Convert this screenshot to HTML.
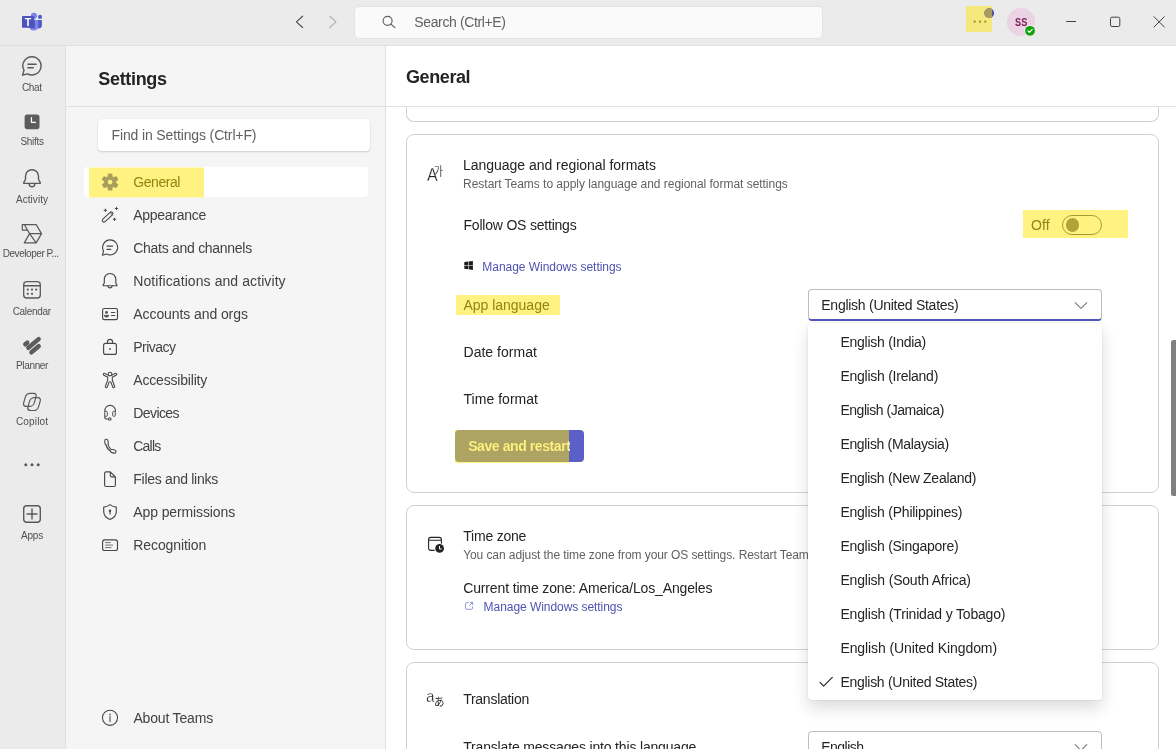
<!DOCTYPE html>
<html><head><meta charset="utf-8"><title>Settings</title>
<style>
*{box-sizing:border-box;margin:0;padding:0}
html,body{width:1176px;height:749px;overflow:hidden;background:#fff;font-family:"Liberation Sans",sans-serif;color:#242424}
.a{position:absolute}
.t{position:absolute;white-space:nowrap}
.card{position:absolute;left:406px;width:753px;border:1px solid #d1d1d1;border-radius:8px;background:#fff}
svg{position:absolute;overflow:visible}
</style></head><body>
<div id="app" style="position:absolute;left:0;top:0;width:1176px;height:749px;will-change:transform">
<div class="a" style="left:0;top:0;width:1176px;height:46px;background:#ebebeb;border-bottom:1px solid #e0e0e0"></div>
<div class="a" style="left:0;top:46px;width:66px;height:703px;background:#ebebeb;border-right:1px solid #e1e1e1"></div>
<div class="a" style="left:66px;top:45px;width:320px;height:704px;background:#f5f5f5;border-right:1px solid #e0e0e0;border-top:1px solid #e0e0e0"></div>
<div class="a" style="left:353.5px;top:5.5px;width:469px;height:33px;background:#fafafa;border:1px solid #e3e3e3;border-radius:5px"></div>
<div class="a" style="left:966px;top:6px;width:26px;height:26px;background:#f5e87c"></div>
<div class="a" style="left:1007px;top:7.5px;width:28px;height:28px;border-radius:50%;background:#ead3e2"></div>
<svg style="left:0px;top:0px" width="60" height="45" viewBox="0 0 60 45" ><circle cx="33.9" cy="15.8" r="3.1" fill="#7b83eb"/><circle cx="40" cy="16.9" r="2.05" fill="#5059c9"/><path d="M36.5 19.9H41.2a.7.7 0 0 1 .7.7V25a3.6 3.6 0 0 1-3.6 3.6h-.3a3.6 3.6 0 0 1-1.8-.5z" fill="#5059c9"/><path d="M29.5 19.9H37.5a.8.8 0 0 1 .8.8V26a4.6 4.6 0 0 1-9.2 0V20.3z" fill="#7b83eb"/><path d="M33 19.9H34.9V27.4a.9.9 0 0 1-.9.9H29.9a4.6 4.6 0 0 1-.8-2.3z" fill="#3b3f8f" opacity=".55"/><rect x="22" y="16" width="12.2" height="11.8" rx=".9" fill="#4b53bc"/><text x="28.05" y="25.9" font-family="Liberation Sans,sans-serif" font-weight="700" font-size="10.6" fill="#fff" text-anchor="middle">T</text></svg>
<svg style="left:0px;top:0px" width="60" height="45" viewBox="0 0 60 45" ><path d="M302.6 16.2L296.4 21.85L302.6 27.5" fill="none" stroke="#4d4d4d" stroke-width="1.15" stroke-linecap="round" stroke-linejoin="round"/><path d="M329.8 16.2L336 21.85L329.8 27.5" fill="none" stroke="#b3b3b3" stroke-width="1.25" stroke-linecap="round" stroke-linejoin="round"/><circle cx="387.6" cy="20.8" r="4.5" fill="none" stroke="#616161" stroke-width="1.15"/><path d="M390.9 24.1L394.9 27.6" stroke="#616161" stroke-width="1.25" stroke-linecap="round"/></svg>
<svg style="left:0px;top:0px" width="60" height="45" viewBox="0 0 60 45" ><circle cx="974.7" cy="21.7" r="1.15" fill="#9e9130"/><circle cx="980" cy="21.7" r="1.15" fill="#9e9130"/><circle cx="985.3" cy="21.7" r="1.15" fill="#9e9130"/><circle cx="989.2" cy="13.1" r="4.9" fill="#4f52b2"/><clipPath id="cb"><rect x="966" y="6" width="26" height="26"/></clipPath><circle cx="989.2" cy="13.1" r="4.9" fill="#a89c5f" clip-path="url(#cb)"/><circle cx="1030" cy="30.8" r="6" fill="#ebebeb"/><circle cx="1030" cy="30.8" r="4.9" fill="#13a10e"/><path d="M1027.9 30.9L1029.4 32.4L1032.2 29.4" fill="none" stroke="#fff" stroke-width="1.2" stroke-linecap="round" stroke-linejoin="round"/><path d="M1066.3 21.5H1076" stroke="#424242" stroke-width="1"/><rect x="1110.5" y="17.2" width="9.3" height="9.3" rx="1.4" fill="none" stroke="#424242" stroke-width="1"/><path d="M1154 16.7L1164.3 27M1164.3 16.7L1154 27" stroke="#424242" stroke-width="1" stroke-linecap="round"/></svg>
<div class="t" id="x23" style="left:414.3px;top:14px;font-size:14px;line-height:16px;height:16px;color:#616161;letter-spacing:-0.369px;">Search (Ctrl+E)</div>
<div class="t" id="x24" style="left:1015.0px;top:16px;font-size:11.4px;line-height:12px;height:12px;color:#80215d;font-weight:700;transform-origin:0 50%;transform:scaleX(0.8090);">SS</div>
<svg style="left:0px;top:0px" width="66" height="749" viewBox="0 0 66 749" ><path d="M32 56.7A9.1 9.1 0 1 1 27.6 73.8L22.6 75.2L24 70.2A9.1 9.1 0 0 1 32 56.7Z" fill="none" stroke="#595959" stroke-width="1.4" stroke-linecap="round" stroke-linejoin="round" /><path d="M27.9 64.2H36.1M27.9 67.8H33.3" fill="none" stroke="#595959" stroke-width="1.4" stroke-linecap="round" stroke-linejoin="round" /><rect x="24.6" y="114.5" width="14.9" height="14.7" rx="2.6" fill="#5c5c5c"/><path d="M31.4 117.6V122.3H35.5" fill="none" stroke="#fff" stroke-width="1.3" stroke-linecap="round" stroke-linejoin="round" /><path d="M25.5 179.5V176.2A6.5 6.5 0 0 1 38.5 176.2V179.5L40.3 182.6A.5.5 0 0 1 39.9 183.4H24.1A.5.5 0 0 1 23.7 182.6Z" fill="none" stroke="#595959" stroke-width="1.4" stroke-linecap="round" stroke-linejoin="round" /><path d="M29.2 183.8A2.8 3.1 0 0 0 34.8 183.8" fill="none" stroke="#595959" stroke-width="1.4" stroke-linecap="round" stroke-linejoin="round" /><path d="M22.3 224.6H36.2L41.5 233.6L36.2 242.9H24.3L29.6 233.6L24.4 224.8M29.6 233.6H41.3M29.6 233.6L36 242.7M22.3 224.6V230.1H27.4" fill="none" stroke="#595959" stroke-width="1.2" stroke-linecap="round" stroke-linejoin="round" /><rect x="23.7" y="281.7" width="16.6" height="16.3" rx="3.1" fill="none" stroke="#595959" stroke-width="1.3"/><path d="M23.7 285.7H40.3" fill="none" stroke="#595959" stroke-width="1.4" stroke-linecap="round" stroke-linejoin="round" /><circle cx="27.8" cy="289.6" r="1.1" fill="#595959"/><circle cx="32" cy="289.6" r="1.1" fill="#595959"/><circle cx="36.2" cy="289.6" r="1.1" fill="#595959"/><circle cx="27.8" cy="293.8" r="1.1" fill="#595959"/><circle cx="32" cy="293.8" r="1.1" fill="#595959"/><g stroke="#5c5c5c" stroke-width="4.4" stroke-linecap="round"><path d="M25.3 344.3L27.3 342.6"/><path d="M28.3 347.8L38.7 339.1"/><path d="M31.4 352.3L38.7 346.2"/></g><g fill="none" stroke="#595959" stroke-width="1.2" stroke-linejoin="round"><rect x="0" y="0" width="10.6" height="13.1" rx="3.4" transform="translate(26.4,393.3) skewX(-16)"/><rect x="0" y="0" width="10.6" height="12.9" rx="3.4" transform="translate(30.6,397.6) skewX(-16)"/></g><circle cx="25.8" cy="464.8" r="1.5" fill="#595959"/><circle cx="32" cy="464.8" r="1.5" fill="#595959"/><circle cx="38.2" cy="464.8" r="1.5" fill="#595959"/><rect x="23.7" y="505.7" width="16.6" height="16.6" rx="3" fill="none" stroke="#595959" stroke-width="1.4"/><path d="M27 514H37M32 509V519" fill="none" stroke="#595959" stroke-width="1.4" stroke-linecap="round" stroke-linejoin="round" /></svg>
<div class="t" id="x15" style="left:22.0px;top:82px;font-size:10px;line-height:11px;height:11px;color:#505050;letter-spacing:-0.375px;">Chat</div>
<div class="t" id="x16" style="left:20.5px;top:136px;font-size:10px;line-height:11px;height:11px;color:#505050;letter-spacing:-0.323px;">Shifts</div>
<div class="t" id="x17" style="left:16.0px;top:194px;font-size:10px;line-height:11px;height:11px;color:#505050;letter-spacing:0.047px;">Activity</div>
<div class="t" id="x18" style="left:2.7px;top:248px;font-size:10px;line-height:11px;height:11px;color:#505050;letter-spacing:-0.444px;">Developer P...</div>
<div class="t" id="x19" style="left:12.7px;top:306px;font-size:10px;line-height:11px;height:11px;color:#505050;letter-spacing:-0.328px;">Calendar</div>
<div class="t" id="x20" style="left:16.0px;top:360px;font-size:10px;line-height:11px;height:11px;color:#505050;letter-spacing:-0.345px;">Planner</div>
<div class="t" id="x21" style="left:16.0px;top:416px;font-size:10px;line-height:11px;height:11px;color:#505050;letter-spacing:0.143px;">Copilot</div>
<div class="t" id="x22" style="left:21.0px;top:530px;font-size:10px;line-height:11px;height:11px;color:#505050;letter-spacing:-0.199px;">Apps</div>
<div class="a" style="left:98px;top:119px;width:272px;height:32px;background:#fff;border-radius:4px;box-shadow:0 1px 2px rgba(0,0,0,.16),0 0 1px rgba(0,0,0,.10)"></div>
<div class="a" style="left:84px;top:167px;width:284px;height:30px;background:#fff;border-radius:4px"></div>
<div class="a" style="left:89px;top:167px;width:115px;height:31px;background:linear-gradient(180deg,#fff9c0 0,#fff9c0 1px,#fff280 1px,#fff280 30px,#f9f4c6 30px)"></div>
<svg style="left:0px;top:0px" width="386" height="749" viewBox="0 0 386 749" ><circle cx="110.1" cy="182.1" r="6.1" fill="#a99f5c"/><rect x="107.75" y="173.6" width="4.7" height="5" rx="1.2" fill="#a99f5c" transform="rotate(0 110.1 182.1)"/><rect x="107.75" y="173.6" width="4.7" height="5" rx="1.2" fill="#a99f5c" transform="rotate(60 110.1 182.1)"/><rect x="107.75" y="173.6" width="4.7" height="5" rx="1.2" fill="#a99f5c" transform="rotate(120 110.1 182.1)"/><rect x="107.75" y="173.6" width="4.7" height="5" rx="1.2" fill="#a99f5c" transform="rotate(180 110.1 182.1)"/><rect x="107.75" y="173.6" width="4.7" height="5" rx="1.2" fill="#a99f5c" transform="rotate(240 110.1 182.1)"/><rect x="107.75" y="173.6" width="4.7" height="5" rx="1.2" fill="#a99f5c" transform="rotate(300 110.1 182.1)"/><circle cx="110.1" cy="182.1" r="2.35" fill="#fff280"/><rect x="-6.6" y="-1.65" width="13.2" height="3.3" rx="1.65" fill="none" stroke="#484848" stroke-width="1.1" transform="translate(107.6,217) rotate(-43)"/><path d="M110.3 212.6L112.4 214.9" fill="none" stroke="#484848" stroke-width="1.0" stroke-linecap="round" stroke-linejoin="round" /><path d="M104.15 210.3H106.65M105.4 209.05V211.55" fill="none" stroke="#484848" stroke-width="0.95" stroke-linecap="round" stroke-linejoin="round" /><path d="M115.25 208.5H117.75M116.5 207.25V209.75" fill="none" stroke="#484848" stroke-width="0.95" stroke-linecap="round" stroke-linejoin="round" /><path d="M113.25 219.3H115.75M114.5 218.05V220.55" fill="none" stroke="#484848" stroke-width="0.95" stroke-linecap="round" stroke-linejoin="round" /><path d="M110.1 239.9A7.5 7.5 0 1 1 106.6 254L102.4 255.2L103.6 251A7.5 7.5 0 0 1 110.1 239.9Z" fill="none" stroke="#484848" stroke-width="1.15" stroke-linecap="round" stroke-linejoin="round" /><path d="M107 246.1H112.7M107 249.4H110.8" fill="none" stroke="#484848" stroke-width="1.15" stroke-linecap="round" stroke-linejoin="round" /><path d="M104.3 283V279.2A5.75 5.75 0 0 1 115.8 279.2V283L117 285.1A.4.4 0 0 1 116.7 285.7H103.4A.4.4 0 0 1 103.1 285.1Z" fill="none" stroke="#484848" stroke-width="1.15" stroke-linecap="round" stroke-linejoin="round" /><path d="M107.8 286.1A2.3 2.55 0 0 0 112.2 286.1" fill="none" stroke="#484848" stroke-width="1.15" stroke-linecap="round" stroke-linejoin="round" /><rect x="102.6" y="308.5" width="14.9" height="11.1" rx="1.7" fill="none" stroke="#484848" stroke-width="1.15"/><circle cx="106.5" cy="312.4" r="1.3" fill="#484848"/><path d="M104.2 315.2H108.8A2.3 2 0 0 1 104.2 315.2Z" fill="#484848" stroke="#484848" stroke-width=".5"/><path d="M111.4 312.5H114.8M111.4 315.4H114.8" fill="none" stroke="#484848" stroke-width="1.05" stroke-linecap="round" stroke-linejoin="round" /><rect x="103.6" y="343.4" width="12.8" height="11" rx="2" fill="none" stroke="#484848" stroke-width="1.15"/><path d="M107.5 343.3V341.8A2.5 2.5 0 0 1 112.5 341.8V343.3" fill="none" stroke="#484848" stroke-width="1.15" stroke-linecap="round" stroke-linejoin="round" /><circle cx="110" cy="348.9" r=".95" fill="#484848"/><g fill="none" stroke-linecap="round" stroke-linejoin="round"><g stroke="#484848"><path d="M104.3 374.3L108.4 376.4H111.6L115.7 374.3" stroke-width="3.1"/><path d="M110 376.4V381.2" stroke-width="5.7" stroke-linecap="butt"/><path d="M108.6 380.6L106.3 386.6M111.4 380.6L113.7 386.6" stroke-width="3.1"/></g><g stroke="#f5f5f5"><path d="M104.3 374.3L108.4 376.4H111.6L115.7 374.3" stroke-width="1.0"/><path d="M110 376.2V381.4" stroke-width="3.6" stroke-linecap="butt"/><path d="M108.6 380.6L106.3 386.6M111.4 380.6L113.7 386.6" stroke-width="1.0"/></g></g><circle cx="110" cy="374" r="1.85" fill="#f5f5f5" stroke="#484848" stroke-width="1.05"/><path d="M104.8 411.3V410.6A5.3 5.3 0 0 1 115.4 410.6V411.3" fill="none" stroke="#484848" stroke-width="1.15" stroke-linecap="round" stroke-linejoin="round" /><rect x="104.7" y="411.4" width="2.6" height="4.9" rx=".9" fill="none" stroke="#484848" stroke-width=".95"/><rect x="112.7" y="411.4" width="2.6" height="4.9" rx=".9" fill="none" stroke="#484848" stroke-width=".95"/><path d="M104.8 416V417.2A1.8 1.8 0 0 0 106.6 419H108.4" fill="none" stroke="#484848" stroke-width="1.15" stroke-linecap="round" stroke-linejoin="round" /><circle cx="109.8" cy="419" r="1.3" fill="none" stroke="#484848" stroke-width="1.05"/><g fill="none" stroke-linecap="round" stroke="#484848"><path d="M106.7 442C106.9 446.6 109.4 450.3 113.2 451.4" stroke-width="3.2"/><path d="M106.3 440.9L106.6 443.1M112.3 451.1L114.4 451.6" stroke-width="4.3"/></g><g fill="none" stroke-linecap="round" stroke="#f5f5f5"><path d="M106.7 442C106.9 446.6 109.4 450.3 113.2 451.4" stroke-width="1.0"/><path d="M106.3 440.9L106.6 443.1M112.3 451.1L114.4 451.6" stroke-width="2.1"/></g><path d="M110.3 471.9H106.1A1.5 1.5 0 0 0 104.6 473.4V485A1.5 1.5 0 0 0 106.1 486.5H113.9A1.5 1.5 0 0 0 115.4 485V477L110.3 471.9V475.6A1.2 1.2 0 0 0 111.5 476.8H115.2" fill="none" stroke="#484848" stroke-width="1.15" stroke-linecap="round" stroke-linejoin="round" /><path d="M110 504.6C108.2 506 105.8 506.9 103.7 507.1V511.6C103.7 515.6 106.2 518.1 110 519.5C113.8 518.1 116.3 515.6 116.3 511.6V507.1C114.2 506.9 111.8 506 110 504.6Z" fill="none" stroke="#484848" stroke-width="1.15" stroke-linecap="round" stroke-linejoin="round" /><circle cx="110" cy="510.7" r="1.25" fill="#484848"/><path d="M110 511V514" fill="none" stroke="#484848" stroke-width="1.2" stroke-linecap="round" stroke-linejoin="round" /><rect x="102.6" y="539.8" width="14.9" height="10.7" rx="2.1" fill="none" stroke="#484848" stroke-width="1.15"/><path d="M105.5 542.6H110.3M105.5 545.1H112.6M105.5 547.6H111" fill="none" stroke="#6a6a6a" stroke-width="0.95" stroke-linecap="round" stroke-linejoin="round" /><circle cx="110" cy="717.8" r="7.55" fill="none" stroke="#484848" stroke-width="1.05"/><path d="M110 716.5V721.5" fill="none" stroke="#666" stroke-width="1.3" stroke-linecap="round" stroke-linejoin="round" /><circle cx="110" cy="714.4" r=".85" fill="#666"/></svg>
<div class="t" id="x0" style="left:98.3px;top:69px;font-size:18px;line-height:20px;height:20px;color:#242424;font-weight:700;letter-spacing:-0.331px;">Settings</div>
<div class="t" id="x1" style="left:111.5px;top:127px;font-size:14px;line-height:16px;height:16px;color:#616161;letter-spacing:-0.134px;">Find in Settings (Ctrl+F)</div>
<div class="t" id="x2" style="left:133.3px;top:174px;font-size:14px;line-height:16px;height:16px;color:#928512;letter-spacing:-0.452px;">General</div>
<div class="t" id="x3" style="left:133.3px;top:207px;font-size:14px;line-height:16px;height:16px;color:#424242;letter-spacing:-0.291px;">Appearance</div>
<div class="t" id="x4" style="left:133.3px;top:240px;font-size:14px;line-height:16px;height:16px;color:#424242;letter-spacing:-0.286px;">Chats and channels</div>
<div class="t" id="x5" style="left:133.3px;top:273px;font-size:14px;line-height:16px;height:16px;color:#424242;letter-spacing:0.085px;">Notifications and activity</div>
<div class="t" id="x6" style="left:133.3px;top:306px;font-size:14px;line-height:16px;height:16px;color:#424242;letter-spacing:-0.086px;">Accounts and orgs</div>
<div class="t" id="x7" style="left:133.3px;top:339px;font-size:14px;line-height:16px;height:16px;color:#424242;letter-spacing:-0.518px;">Privacy</div>
<div class="t" id="x8" style="left:133.3px;top:372px;font-size:14px;line-height:16px;height:16px;color:#424242;letter-spacing:-0.188px;">Accessibility</div>
<div class="t" id="x9" style="left:133.3px;top:405px;font-size:14px;line-height:16px;height:16px;color:#424242;letter-spacing:-0.599px;">Devices</div>
<div class="t" id="x10" style="left:133.3px;top:438px;font-size:14px;line-height:16px;height:16px;color:#424242;letter-spacing:-0.806px;">Calls</div>
<div class="t" id="x11" style="left:133.3px;top:471px;font-size:14px;line-height:16px;height:16px;color:#424242;letter-spacing:-0.272px;">Files and links</div>
<div class="t" id="x12" style="left:133.3px;top:504px;font-size:14px;line-height:16px;height:16px;color:#424242;letter-spacing:-0.114px;">App permissions</div>
<div class="t" id="x13" style="left:133.3px;top:537px;font-size:14px;line-height:16px;height:16px;color:#424242;letter-spacing:-0.104px;">Recognition</div>
<div class="t" id="x14" style="left:133.4px;top:710px;font-size:14px;line-height:16px;height:16px;color:#424242;letter-spacing:-0.167px;">About Teams</div>
<div class="card" style="top:60px;height:62px;border-top:none;border-radius:0 0 8px 8px"></div>
<div class="a" style="left:386px;top:46px;width:790px;height:60px;background:#fff"></div>
<div class="a" style="left:66px;top:106px;width:1110px;height:1px;background:#e0e0e0"></div>
<div class="card" style="top:134px;height:359px"></div>
<div class="card" style="top:505px;height:145px"></div>
<div class="card" style="top:662px;height:145px"></div>
<div class="a" style="left:1023px;top:210px;width:105px;height:28px;background:#fff280"></div>
<div class="a" style="left:1062px;top:215px;width:40px;height:20px;border:1px solid #a89b32;border-radius:10px"></div>
<div class="a" style="left:1065.7px;top:218.2px;width:13.6px;height:13.6px;border-radius:50%;background:#b0a338"></div>
<div class="a" style="left:456px;top:295px;width:104px;height:20px;background:#fff280"></div>
<div class="a" style="left:455px;top:430px;width:114px;height:33px;background:#fff280"></div>
<div class="a" style="left:455px;top:430px;width:129px;height:32px;background:linear-gradient(90deg,#ada362 0,#ada362 114px,#5b5fc7 114px);border-radius:4px"></div>
<div class="a" style="left:1171px;top:340px;width:6px;height:155.5px;background:#808080;border-radius:2.5px 0 0 2.5px"></div>
<div class="a" style="left:808px;top:731px;width:294px;height:32px;border:1px solid #bdbdbd;border-radius:4px;background:#fff"></div>
<svg style="left:386px;top:0px" width="790" height="749" viewBox="386 0 790 749" ><g fill="#1b1b1b"><path d="M464.3 262.1L468.25 261.6V265.25H464.3Z"/><path d="M468.75 261.5L472.9 261V265.25H468.75Z"/><path d="M464.3 265.65H468.25V269.2L464.3 268.7Z"/><path d="M468.75 265.65H472.9V269.9L468.75 269.3Z"/></g><path d="M434.2 550.4H430.8A2.2 2.2 0 0 1 428.6 548.2V539.6A2.2 2.2 0 0 1 430.8 537.4H439.2A2.2 2.2 0 0 1 441.4 539.6V543.2M428.6 540.3H441.4" fill="none" stroke="#242424" stroke-width="1.1" stroke-linecap="round" stroke-linejoin="round" /><circle cx="439.6" cy="548.4" r="4.35" fill="#242424"/><path d="M439.5 546.4V549H441.2" fill="none" stroke="#fff" stroke-width="1.0" stroke-linecap="round" stroke-linejoin="round" /><path d="M468.2 602.6H466.6A1 1 0 0 0 465.6 603.6V608.3A1 1 0 0 0 466.6 609.3H471.5A1 1 0 0 0 472.5 608.3V606.8M469.6 605.4L472.5 602.5M470.4 602.4H472.6V604.6" fill="none" stroke="#7f82cc" stroke-width="0.85" stroke-linecap="round" stroke-linejoin="round" /><path d="M1075.2 744.7L1081 750.4L1086.8 744.7" fill="none" stroke="#7a7a7a" stroke-width="1.1" stroke-linecap="round" stroke-linejoin="round" /></svg>
<div class="t" style="left:427.1px;top:160.62px;font-size:18.4px;line-height:27.60px;height:27.60px;font-family:'Liberation Sans',sans-serif;color:#242424;-webkit-text-stroke:0.28px #fff;transform-origin:0 100%;transform:scaleX(0.87)">A</div>
<div class="t" style="left:433.5px;top:162.29px;font-size:12.5px;line-height:18.75px;height:18.75px;font-family:'Noto Sans CJK KR','NanumGothic',sans-serif;color:#242424;-webkit-text-stroke:0.1px #fff;transform-origin:0 100%;transform:scaleX(0.77)">가</div>
<div class="t" style="left:426.3px;top:684.50px;font-size:16.6px;line-height:24.90px;height:24.90px;font-family:'Liberation Sans',sans-serif;color:#242424;-webkit-text-stroke:0.35px #fff;transform-origin:0 100%;transform:scaleX(0.92)">a</div>
<div class="t" style="left:434.4px;top:692.50px;font-size:11.4px;line-height:17.10px;height:17.10px;font-family:'Noto Sans CJK JP','IPAGothic',sans-serif;color:#242424;-webkit-text-stroke:0px #fff;transform-origin:0 100%;transform:scaleX(0.92)">あ</div>
<div class="t" id="x25" style="left:406.0px;top:67px;font-size:18px;line-height:20px;height:20px;color:#242424;font-weight:700;letter-spacing:-0.408px;">General</div>
<div class="t" id="x26" style="left:463.1px;top:157px;font-size:14px;line-height:16px;height:16px;color:#242424;letter-spacing:-0.033px;">Language and regional formats</div>
<div class="t" id="x27" style="left:463.1px;top:177px;font-size:12px;line-height:14px;height:14px;color:#616161;letter-spacing:-0.033px;">Restart Teams to apply language and regional format settings</div>
<div class="t" id="x28" style="left:463.5px;top:217px;font-size:14px;line-height:16px;height:16px;color:#242424;letter-spacing:-0.207px;">Follow OS settings</div>
<div class="t" id="x29" style="left:1031.0px;top:217px;font-size:14px;line-height:16px;height:16px;color:#928512;letter-spacing:0.139px;">Off</div>
<div class="t" id="x30" style="left:482.3px;top:260px;font-size:12px;line-height:14px;height:14px;color:#4f52b2;letter-spacing:-0.035px;">Manage Windows settings</div>
<div class="t" id="x31" style="left:463.5px;top:297px;font-size:14px;line-height:16px;height:16px;color:#928512;letter-spacing:-0.020px;">App language</div>
<div class="t" id="x32" style="left:463.5px;top:344px;font-size:14px;line-height:16px;height:16px;color:#242424;letter-spacing:0.026px;">Date format</div>
<div class="t" id="x33" style="left:463.5px;top:391px;font-size:14px;line-height:16px;height:16px;color:#242424;letter-spacing:0.034px;">Time format</div>
<div class="t" id="x34" style="left:463.2px;top:528px;font-size:14px;line-height:16px;height:16px;color:#242424;letter-spacing:-0.205px;">Time zone</div>
<div class="t" id="x35" style="left:463.2px;top:548px;font-size:12px;line-height:14px;height:14px;color:#616161;letter-spacing:-0.082px;">You can adjust the time zone from your OS settings. Restart Teams to apply</div>
<div class="t" id="x36" style="left:463.2px;top:580px;font-size:14px;line-height:16px;height:16px;color:#242424;letter-spacing:-0.140px;">Current time zone: America/Los_Angeles</div>
<div class="t" id="x37" style="left:483.6px;top:600px;font-size:12px;line-height:14px;height:14px;color:#4f52b2;letter-spacing:-0.054px;">Manage Windows settings</div>
<div class="t" id="x38" style="left:463.2px;top:691px;font-size:14px;line-height:16px;height:16px;color:#242424;letter-spacing:-0.265px;">Translation</div>
<div class="t" id="x39" style="left:463.2px;top:739px;font-size:14px;line-height:16px;height:16px;color:#242424;letter-spacing:-0.166px;">Translate messages into this language</div>
<div class="t" id="x52" style="left:821.3px;top:739px;font-size:14px;line-height:16px;height:16px;color:#242424;letter-spacing:-0.537px;">English</div>
<div class="t" id="x53" style="left:468.2px;top:438px;font-size:14px;line-height:16px;height:16px;color:transparent;font-weight:700;letter-spacing:-0.417px;background:linear-gradient(90deg,#fff27e 0,#fff27e 101px,#fff 101px);-webkit-background-clip:text;background-clip:text;">Save and restart</div>
<div class="a" style="left:808px;top:289px;width:294px;height:32px;border:1px solid #bdbdbd;border-bottom:2px solid #5256ba;border-radius:4px;background:#fff"></div>
<div class="a" style="left:808px;top:323px;width:294px;height:377px;background:#fff;border-radius:4px;box-shadow:0 8px 16px rgba(0,0,0,.14),0 0 2px rgba(0,0,0,.12)"></div>
<svg style="left:800px;top:280px" width="320" height="440" viewBox="800 280 320 440" ><path d="M820.1 682.3L823.6 686.1L832.3 677.4" fill="none" stroke="#242424" stroke-width="1.15" stroke-linecap="round" stroke-linejoin="round" /><path d="M1075.2 302.7L1081 308.4L1086.8 302.7" fill="none" stroke="#7a7a7a" stroke-width="1.1" stroke-linecap="round" stroke-linejoin="round" /></svg>
<div class="t" id="x40" style="left:821.3px;top:297px;font-size:14px;line-height:16px;height:16px;color:#242424;letter-spacing:-0.263px;">English (United States)</div>
<div class="t" id="x41" style="left:840.4px;top:334px;font-size:14px;line-height:16px;height:16px;color:#242424;letter-spacing:-0.257px;">English (India)</div>
<div class="t" id="x42" style="left:840.4px;top:368px;font-size:14px;line-height:16px;height:16px;color:#242424;letter-spacing:-0.252px;">English (Ireland)</div>
<div class="t" id="x43" style="left:840.4px;top:402px;font-size:14px;line-height:16px;height:16px;color:#242424;letter-spacing:-0.460px;">English (Jamaica)</div>
<div class="t" id="x44" style="left:840.4px;top:436px;font-size:14px;line-height:16px;height:16px;color:#242424;letter-spacing:-0.328px;">English (Malaysia)</div>
<div class="t" id="x45" style="left:840.4px;top:470px;font-size:14px;line-height:16px;height:16px;color:#242424;letter-spacing:-0.281px;">English (New Zealand)</div>
<div class="t" id="x46" style="left:840.4px;top:504px;font-size:14px;line-height:16px;height:16px;color:#242424;letter-spacing:-0.237px;">English (Philippines)</div>
<div class="t" id="x47" style="left:840.4px;top:538px;font-size:14px;line-height:16px;height:16px;color:#242424;letter-spacing:-0.259px;">English (Singapore)</div>
<div class="t" id="x48" style="left:840.4px;top:572px;font-size:14px;line-height:16px;height:16px;color:#242424;letter-spacing:-0.192px;">English (South Africa)</div>
<div class="t" id="x49" style="left:840.4px;top:606px;font-size:14px;line-height:16px;height:16px;color:#242424;letter-spacing:-0.175px;">English (Trinidad y Tobago)</div>
<div class="t" id="x50" style="left:840.4px;top:640px;font-size:14px;line-height:16px;height:16px;color:#242424;letter-spacing:-0.089px;">English (United Kingdom)</div>
<div class="t" id="x51" style="left:840.4px;top:674px;font-size:14px;line-height:16px;height:16px;color:#242424;letter-spacing:-0.277px;">English (United States)</div>
</div>
</body></html>
